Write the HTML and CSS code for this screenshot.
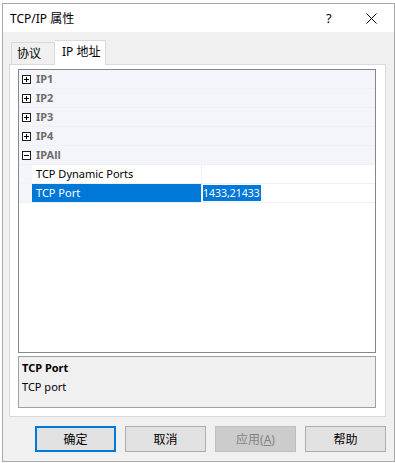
FILE: index.html
```html
<!DOCTYPE html>
<html lang="zh-CN">
<head>
  <meta charset="UTF-8">
  <title>TCP/IP 属性</title>
  <link rel="stylesheet" href="styles.css">
</head>
<body>
  <div class="window">
    <div class="titlebar">
      <span class="title">TCP/IP 属性</span>
      <span class="help">?</span>
      <span class="close">
        <svg width="11" height="11" viewBox="0 0 11 11"><path d="M0.5 0.5L10.5 10.5M10.5 0.5L0.5 10.5" stroke="#000" stroke-width="1"/></svg>
      </span>
    </div>
    <div class="content">
      <div class="tabs">
        <div class="tab">协议</div>
        <div class="tab active">IP 地址</div>
      </div>
      <div class="panel">
        <div class="grid">
          <div class="row category">
            <div class="gutter"><span class="toggle plus"></span></div>
            <div class="cat-name">IP1</div>
          </div>
          <div class="row category">
            <div class="gutter"><span class="toggle plus"></span></div>
            <div class="cat-name">IP2</div>
          </div>
          <div class="row category">
            <div class="gutter"><span class="toggle plus"></span></div>
            <div class="cat-name">IP3</div>
          </div>
          <div class="row category">
            <div class="gutter"><span class="toggle plus"></span></div>
            <div class="cat-name">IP4</div>
          </div>
          <div class="row category">
            <div class="gutter"><span class="toggle"></span></div>
            <div class="cat-name">IPAll</div>
          </div>
          <div class="row prop">
            <div class="gutter"></div>
            <div class="name">TCP Dynamic Ports</div>
            <div class="value"></div>
          </div>
          <div class="row prop selected">
            <div class="gutter"></div>
            <div class="name">TCP Port</div>
            <div class="value"><span class="sel-text">1433,21433</span></div>
          </div>
        </div>
        <div class="desc">
          <div class="desc-title">TCP Port</div>
          <div class="desc-text">TCP port</div>
        </div>
      </div>
      <div class="buttons">
        <button class="btn default">确定</button>
        <button class="btn">取消</button>
        <button class="btn disabled">应用(<u>A</u>)</button>
        <button class="btn">帮助</button>
      </div>
    </div>
  </div>
</body>
</html>
```

FILE: styles.css
```css
body {
  margin: 0;
  background: #fff;
  font-family: "Noto Sans", "Noto Sans CJK SC", sans-serif;
  font-size: 11px;
  color: #000;
}
.window {
  margin: 3px 0 0 2px;
  width: 393px;
  height: 459px;
  box-sizing: border-box;
  border: 1px solid #a9a9a9;
  background: #f0f0f0;
}
.titlebar {
  height: 28px;
  background: #fff;
  display: flex;
  align-items: center;
  padding-left: 7px;
}
.title {
  flex: 1;
  font-size: 12px;
}
.help {
  width: 10px;
  margin-right: 30px;
  font-size: 13px;
}
.close {
  display: flex;
  margin-right: 17px;
}
.content {
  padding: 8px 8px 0 6px;
}
.tabs {
  display: flex;
  align-items: flex-end;
  height: 24px;
  padding-left: 2px;
}
.tab {
  width: 44px;
  height: 22px;
  box-sizing: border-box;
  border: 1px solid #d9d9d9;
  border-bottom: none;
  padding-left: 5px;
  line-height: 21px;
  font-size: 12px;
  color: #000;
}
.tab.active {
  width: 51px;
  height: 25px;
  margin-bottom: -1px;
  background: #fff;
  border-left: none;
  padding-left: 7px;
  line-height: 21px;
}
.panel {
  height: 353px;
  box-sizing: border-box;
  border: 1px solid #d9d9d9;
  background: #fff;
  padding: 4px 9px 0 8px;
}
.grid {
  height: 284px;
  box-sizing: border-box;
  border: 1px solid #828790;
  background: #fff;
}
.row {
  display: flex;
  height: 19px;
  box-sizing: border-box;
  border-bottom: 1px solid #eef0f4;
  line-height: 18px;
}
.category {
  background: #f3f5fa;
}
.gutter {
  width: 13px;
  flex: none;
  box-sizing: border-box;
  background: #f3f5fa;
  display: flex;
  align-items: center;
  padding-left: 3px;
}
.toggle {
  width: 9px;
  height: 9px;
  box-sizing: border-box;
  border: 1px solid #1e1e1e;
  position: relative;
  background: #fff;
}
.toggle::before {
  content: "";
  position: absolute;
  left: 1px;
  top: 3px;
  width: 5px;
  height: 1px;
  background: #000;
}
.toggle.plus::after {
  content: "";
  position: absolute;
  left: 3px;
  top: 1px;
  width: 1px;
  height: 5px;
  background: #000;
}
.cat-name {
  padding-left: 4px;
  font-weight: bold;
  color: #6d6d6d;
}
.name {
  width: 170px;
  flex: none;
  box-sizing: border-box;
  padding-left: 4px;
  border-right: 1px solid #eef0f4;
}
.value {
  flex: 1;
  padding-left: 1px;
}
.prop.selected .name {
  background: #0078d7;
  color: #fff;
}
.sel-text {
  background: #0078d7;
  color: #fff;
  display: inline-block;
  line-height: 16px;
  padding-right: 1px;
  font-size: 10.5px;
}
.desc {
  margin-top: 3px;
  height: 52px;
  box-sizing: border-box;
  border: 1px solid #a0a0a0;
  background: #f0f0f0;
  padding: 2px 3px;
}
.desc-title {
  font-weight: bold;
  line-height: 17px;
}
.desc-text {
  margin-top: 2px;
  line-height: 17px;
}
.buttons {
  display: flex;
  justify-content: flex-end;
  gap: 9px;
  margin-top: 9px;
}
.btn {
  width: 81px;
  height: 26px;
  font-family: inherit;
  font-size: 12px;
  background: #e1e1e1;
  border: 1px solid #adadad;
  color: #000;
  padding: 0;
}
.btn.default {
  border: 2px solid #0078d7;
}
.btn.disabled {
  background: #cccccc;
  border-color: #bfbfbf;
  color: #838383;
}
```
